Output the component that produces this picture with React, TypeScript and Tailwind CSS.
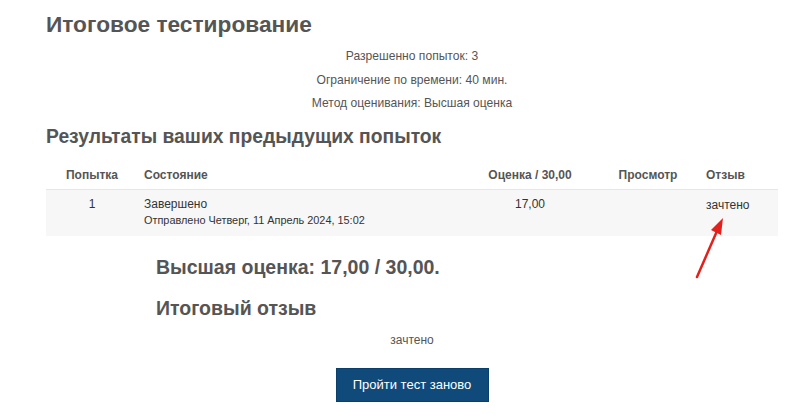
import React from "react";

const font = { fontFamily: '"Liberation Sans", Arial, sans-serif' };

export default function App() {
  return (
    <div className="relative w-[800px] h-[419px] bg-white text-[#555] overflow-hidden" style={font}>
      <div className="ml-[46px] w-[732px] pt-[10px]">
        <h2 className="text-[22.7px] leading-[28px] font-bold text-[#555]">Итоговое тестирование</h2>

        <div className="mt-[11px] flex flex-col items-center text-[12.1px] leading-[15px] gap-[8.5px] text-[#555]">
          <p>Разрешенно попыток: 3</p>
          <p>Ограничение по времени: 40 мин.</p>
          <p>Метод оценивания: Высшая оценка</p>
        </div>

        <h3 className="mt-[14px] text-[19.3px] leading-[24px] font-bold text-[#555]">
          Результаты ваших предыдущих попыток
        </h3>

        {/* attempts table */}
        <div className="mt-[12px] text-[12px]">
          <div className="grid grid-cols-[92px_332px_120px_116px_72px] h-[29px] items-center font-bold border-b border-[#e6e6e6]">
            <div className="text-center">Попытка</div>
            <div className="pl-1.5">Состояние</div>
            <div className="text-center">Оценка / 30,00</div>
            <div className="text-center">Просмотр</div>
            <div>Отзыв</div>
          </div>
          <div className="grid grid-cols-[92px_332px_120px_116px_72px] h-[46px] bg-[#f7f7f7] pt-[7px] text-[#333]">
            <div className="text-center leading-[15px]">1</div>
            <div className="pl-1.5">
              <div className="leading-[15px]">Завершено</div>
              <div className="text-[10.9px] leading-[15px] mt-px">Отправлено Четверг, 11 Апрель 2024, 15:02</div>
            </div>
            <div className="text-center leading-[15px]">17,00</div>
            <div />
            <div className="leading-[15px] pt-px">зачтено</div>
          </div>
        </div>

        <div className="pl-[110px] mt-[19px]">
          <h3 className="text-[19.5px] leading-[24px] font-bold text-[#555]">Высшая оценка: 17,00 / 30,00.</h3>
          <h3 className="mt-[17px] text-[19.5px] leading-[24px] font-bold text-[#555]">Итоговый отзыв</h3>
        </div>

        <p className="mt-[13px] text-center text-[12px] leading-[14px] text-[#555]">зачтено</p>

        <div className="mt-[21px] flex justify-center">
          <button className="w-[153px] h-[34px] bg-[#0f4a7b] text-white text-[13px] border border-[#0b3f6b]">
            Пройти тест заново
          </button>
        </div>
      </div>

      {/* red annotation arrow */}
      <svg className="absolute left-0 top-0 pointer-events-none" width="800" height="419">
        <line x1="697" y1="277" x2="717" y2="231" stroke="#e3201b" strokeWidth="2.5" strokeLinecap="round" />
        <polygon points="723,218 711,230 721,235" fill="#e3201b" />
      </svg>
    </div>
  );
}
